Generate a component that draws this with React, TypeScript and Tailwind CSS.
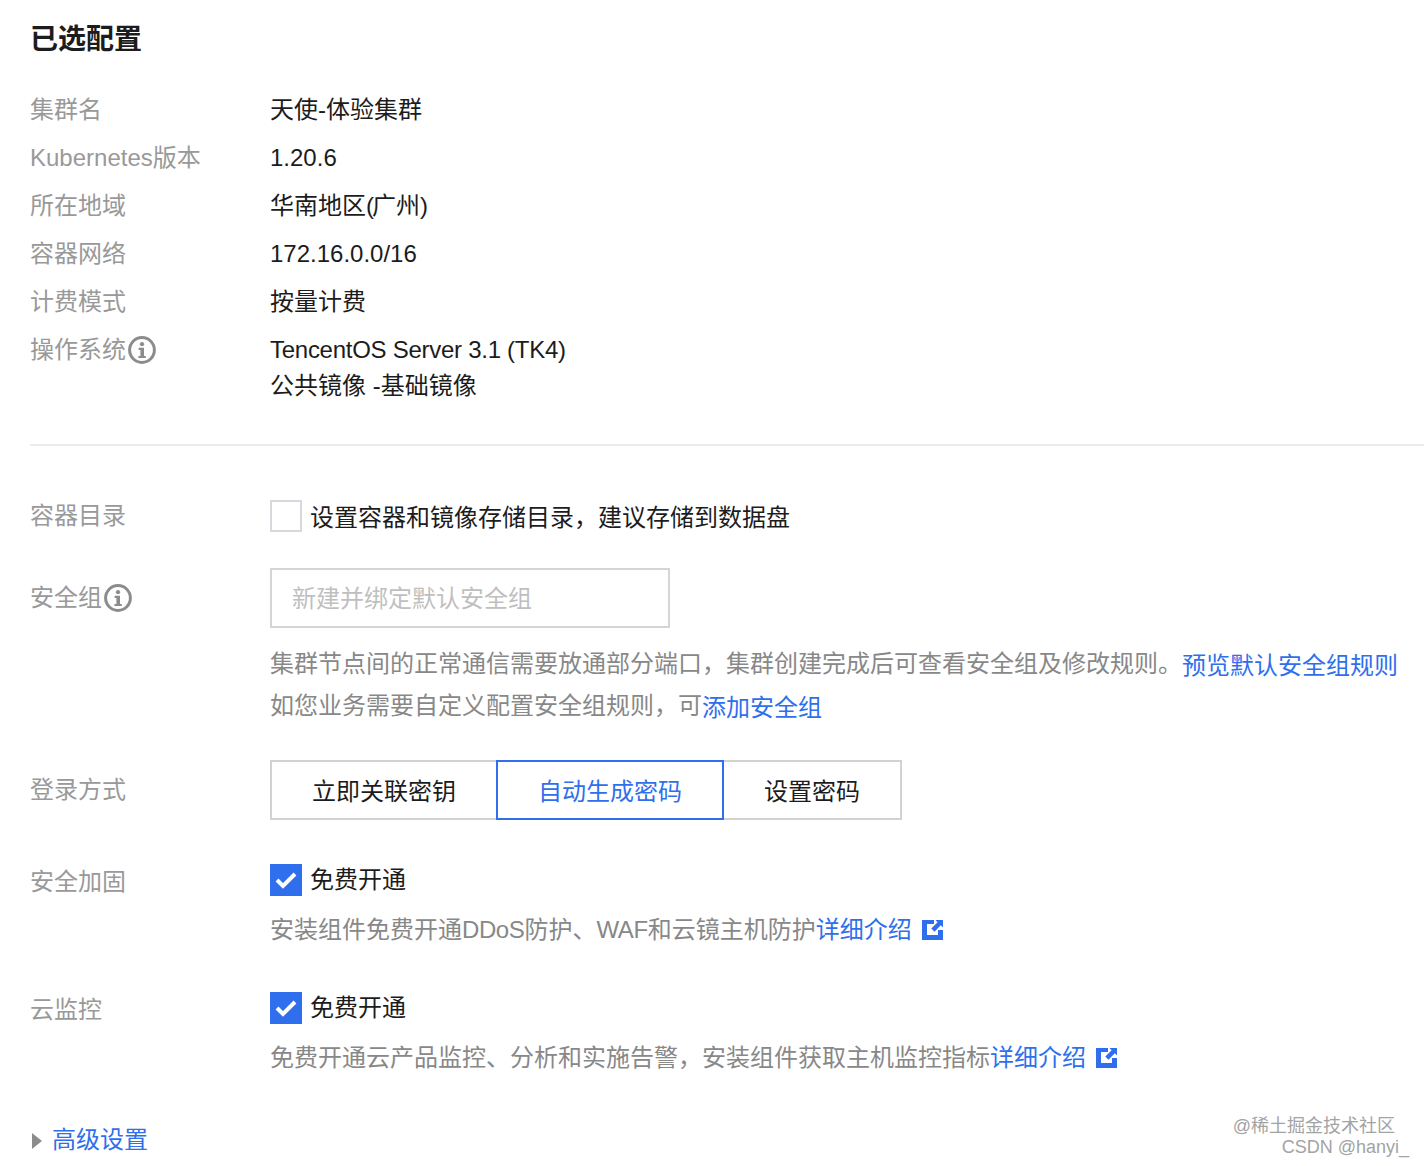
const FONT = "font-['Liberation_Sans','Noto_Sans_CJK_SC',sans-serif]";

function InfoIcon() {
  return (
    <svg width="28" height="28" viewBox="0 0 28 28" className="ml-0.5 shrink-0">
      <circle cx="14" cy="14" r="12.4" fill="none" stroke="#8c8c8c" strokeWidth="3" />
      <circle cx="14" cy="8.2" r="2.1" fill="#8c8c8c" />
      <path d="M10.6 11.8h5.4v8.1h1.8v2.1h-7.4v-2.1h2v-6h-1.8z" fill="#8c8c8c" />
    </svg>
  );
}

function ExternalIcon() {
  return (
    <svg width="21" height="20" viewBox="0 0 21 20" className="shrink-0">
      <path d="M0 0h12v4H5v11h11v-5h5v10H0z" fill="#2f6fed" />
      <path d="M13.5 0H21v7.5l-2.2-2.2-6.3 6.4-3.2-3.2 6.3-6.3z" fill="#2f6fed" />
    </svg>
  );
}

function Checked() {
  return (
    <svg width="32" height="32" viewBox="0 0 32 32" className="shrink-0">
      <rect width="32" height="32" fill="#2f6fed" />
      <path d="M7 16l6 6L25 10" fill="none" stroke="#fff" strokeWidth="4" />
    </svg>
  );
}

function Info({ label, children }: { label: React.ReactNode; children: React.ReactNode }) {
  return (
    <div className="flex h-12 items-center">
      <div className="flex w-[240px] shrink-0 items-center text-[#999999]">{label}</div>
      <div className="text-[#1c1c1c]">{children}</div>
    </div>
  );
}

export default function App() {
  return (
    <div className={`relative h-[1166px] w-[1424px] overflow-hidden bg-white pl-[30px] text-[24px] leading-[36px] ${FONT}`}>
      <h1 className="pt-[22px] text-[28px] font-bold leading-9 text-[#1c1c1c]">已选配置</h1>

      <div className="mt-[28px]">
        <Info label="集群名">天使-体验集群</Info>
        <Info label="Kubernetes版本">1.20.6</Info>
        <Info label="所在地域">
          华南地区<span className="tracking-[-2px]">(</span>广州<span className="tracking-[-2px]">)</span>
        </Info>
        <Info label="容器网络">172.16.0.0/16</Info>
        <Info label="计费模式">按量计费</Info>
      </div>
      <div className="flex pt-1.5">
        <div className="flex h-9 w-[240px] shrink-0 items-center text-[#999999]">
          操作系统
          <InfoIcon />
        </div>
        <div className="text-[#1c1c1c]">
          <div className="tracking-[-0.27px]">TencentOS Server 3.1 (TK4)</div>
          <div>公共镜像 -基础镜像</div>
        </div>
      </div>

      <div className="mt-[40px] h-0.5 bg-[#ececec]" />

      <div className="mt-[52px] flex">
        <div className="w-[240px] shrink-0 text-[#999999]">容器目录</div>
        <div className="flex items-center text-[#1c1c1c]">
          <span className="mb-0.5 h-8 w-8 border-2 border-[#d5d8dc] bg-white" />
          <span className="ml-2 mt-0.5">设置容器和镜像存储目录，建议存储到数据盘</span>
        </div>
      </div>

      <div className="mt-[32px] flex">
        <div className="flex h-[60px] w-[240px] shrink-0 items-center text-[#999999]">
          安全组
          <InfoIcon />
        </div>
        <div>
          <div className="flex h-[60px] w-[400px] items-center border-2 border-[#d5d5d5] pl-5 pt-0.5 text-[#bfbfbf]">
            新建并绑定默认安全组
          </div>
          <div className="mt-[15px] w-[1140px] text-[#888888]">
            <div className="flex h-[42px] items-center whitespace-nowrap">
              集群节点间的正常通信需要放通部分端口，集群创建完成后可查看安全组及修改规则。
              <span className="mt-1 text-[#2f6fed]">预览默认安全组规则</span>
            </div>
            <div className="flex h-[42px] items-center whitespace-nowrap">
              如您业务需要自定义配置安全组规则，可<span className="mt-1 text-[#2f6fed]">添加安全组</span>
            </div>
          </div>
        </div>
      </div>

      <div className="mt-[33px] flex">
        <div className="flex h-[60px] w-[240px] shrink-0 items-center text-[#999999]">登录方式</div>
        <div className="flex h-[60px] text-[#1c1c1c]">
          <div className="flex w-[226px] items-center justify-center border-y-2 border-l-2 border-[#d2d2d2] pt-1">立即关联密钥</div>
          <div className="flex w-[228px] items-center justify-center border-2 border-[#2f6fed] pt-1 text-[#2f6fed]">自动生成密码</div>
          <div className="flex w-[178px] items-center justify-center border-y-2 border-r-2 border-[#d2d2d2] pt-1">设置密码</div>
        </div>
      </div>

      <div className="mt-[42px] flex">
        <div className="mt-0.5 w-[240px] shrink-0 text-[#999999]">安全加固</div>
        <div>
          <div className="flex items-center text-[#1c1c1c]">
            <Checked />
            <span className="ml-2">免费开通</span>
          </div>
          <div className="mt-[14px] flex items-center text-[#888888]">
            安装组件免费开通<span className="tracking-[-0.4px]">DDoS</span>防护、<span className="tracking-[-0.4px]">WAF</span>和云镜主机防护
            <span className="text-[#2f6fed]">详细介绍</span>
            <span className="ml-[10px]">
              <ExternalIcon />
            </span>
          </div>
        </div>
      </div>

      <div className="mt-[42px] flex">
        <div className="mt-0.5 w-[240px] shrink-0 text-[#999999]">云监控</div>
        <div>
          <div className="flex items-center text-[#1c1c1c]">
            <Checked />
            <span className="ml-2">免费开通</span>
          </div>
          <div className="mt-[14px] flex items-center text-[#888888]">
            免费开通云产品监控、分析和实施告警，安装组件获取主机监控指标
            <span className="text-[#2f6fed]">详细介绍</span>
            <span className="ml-[10px]">
              <ExternalIcon />
            </span>
          </div>
        </div>
      </div>

      <div className="mt-[46px] flex items-center">
        <svg width="10" height="16" viewBox="0 0 10 16" className="ml-0.5 mt-px">
          <path d="M0 0l10 8-10 8z" fill="#8c8c8c" />
        </svg>
        <span className="ml-[10px] text-[#2f6fed]">高级设置</span>
      </div>

      <div className="absolute right-[15px] top-[1116px] text-right text-[18px] leading-[21px] text-[#a3a3a3]">
        <div className="pr-[14px]">@稀土掘金技术社区</div>
        <div>CSDN @hanyi_</div>
      </div>
    </div>
  );
}
